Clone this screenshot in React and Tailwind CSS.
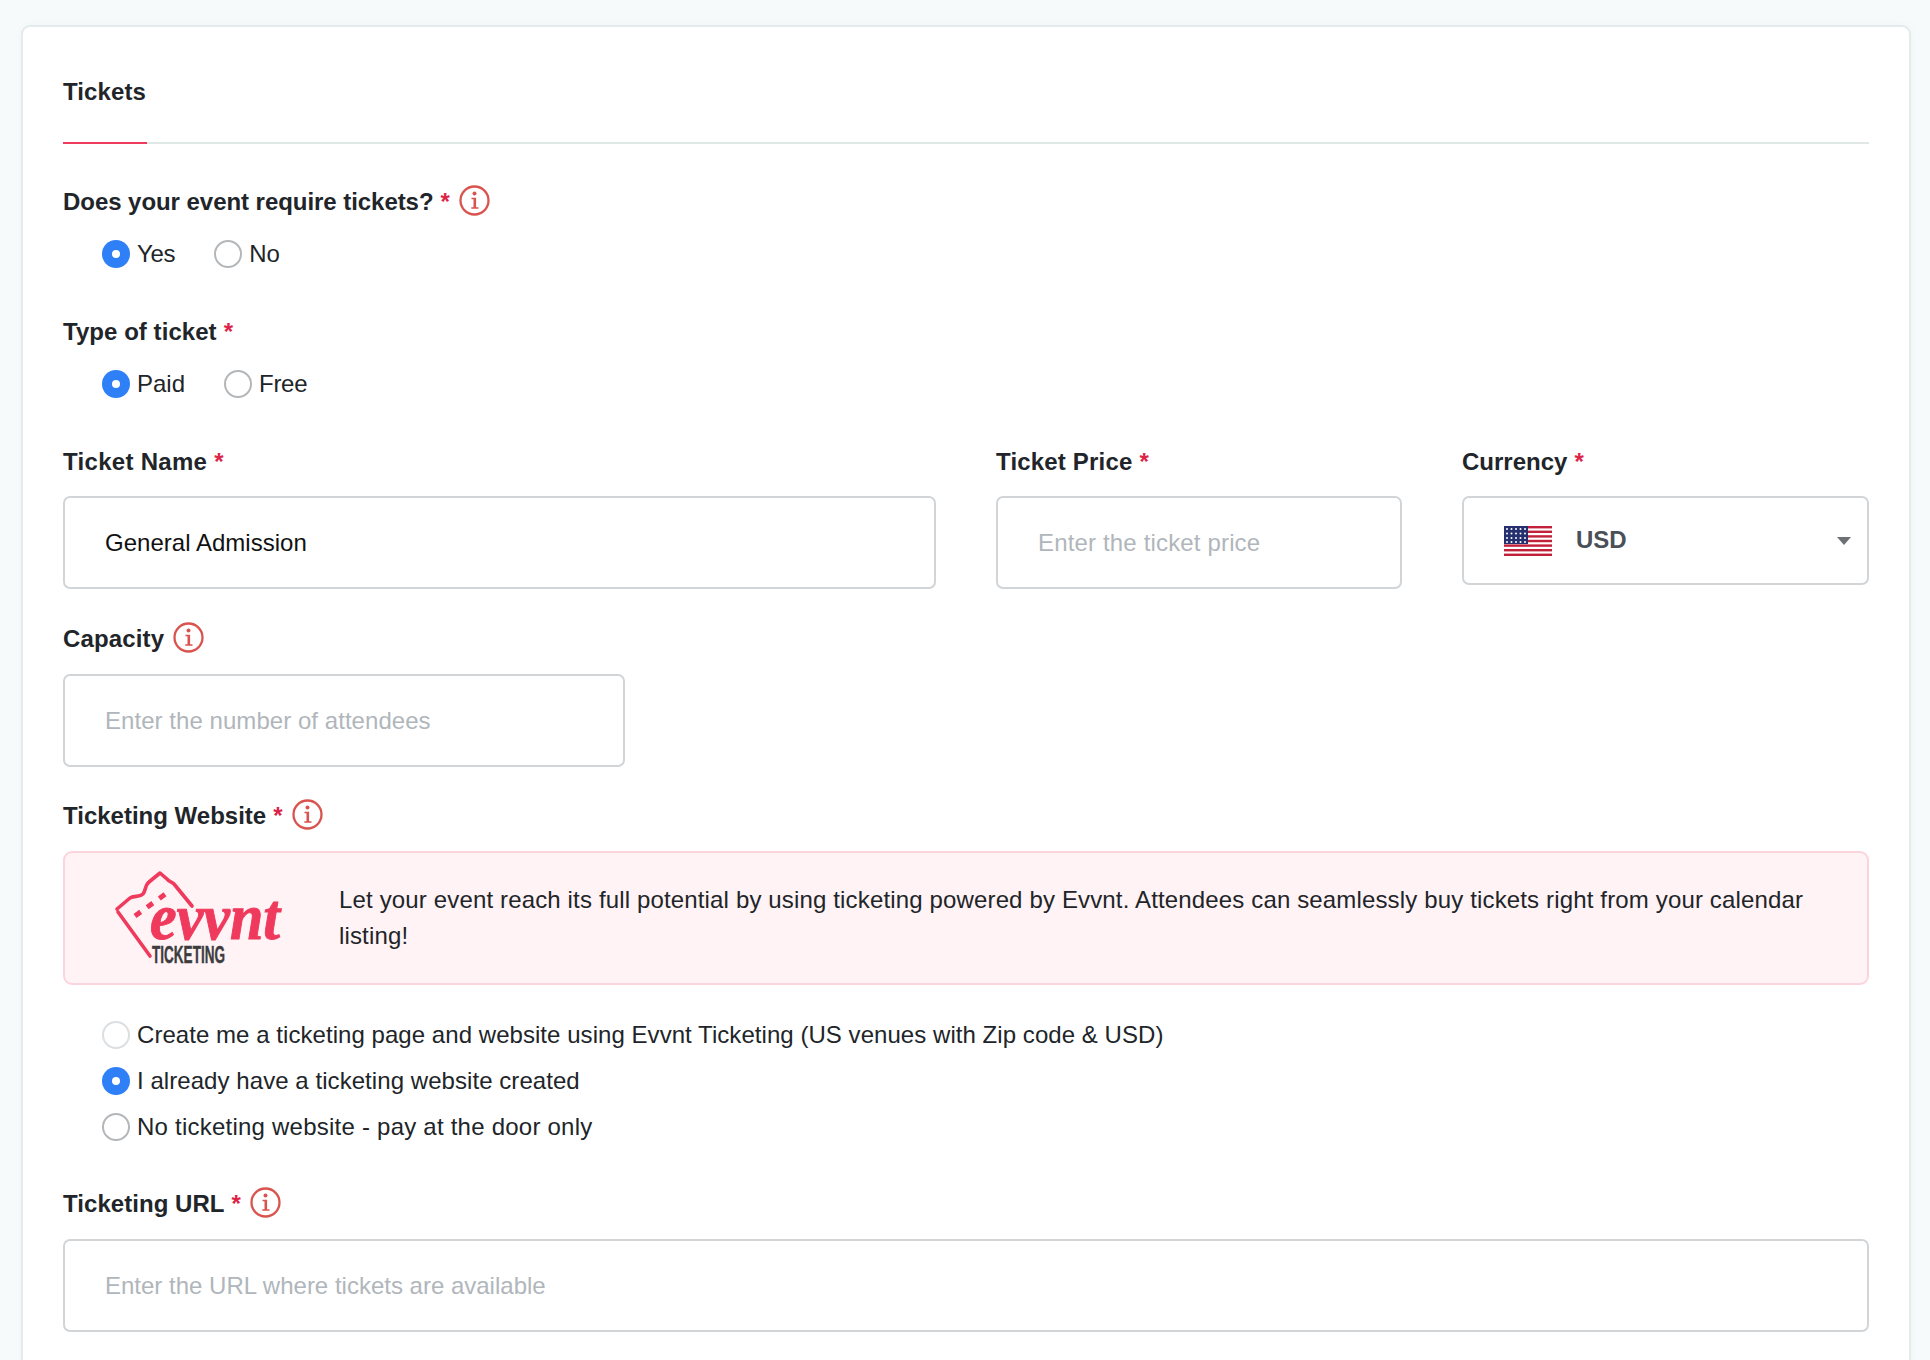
const sans = { fontFamily: '"Liberation Sans", Arial, sans-serif' };

const InfoIcon = () => (
  <svg width="31" height="31" viewBox="0 0 31 31" fill="none" className="shrink-0">
    <circle cx="15.5" cy="15.5" r="14" stroke="#d9534f" strokeWidth="2.3" />
    <circle cx="15.5" cy="8.5" r="2" fill="#d9534f" />
    <path d="M12.5 12.8h4.6v9.4h2.4v1.5h-7.2v-1.5h2.2v-8h-2z" fill="#d9534f" />
  </svg>
);

const Req = () => <span className="text-[#dc2447] ml-[7px]">*</span>;

const Label = ({ children, required, info, className = '' }) => (
  <div className={`flex items-center h-[34px] text-[24px] font-bold text-[#212529] leading-none ${className}`}>
    <span>{children}</span>
    {required && <Req />}
    {info && <span className="ml-[9px] -mt-[3px]"><InfoIcon /></span>}
  </div>
);

const Radio = ({ checked, faint }) =>
  checked ? (
    <span className="w-[28px] h-[28px] rounded-full bg-[#2f80f6] flex items-center justify-center shrink-0">
      <span className="w-[8px] h-[8px] rounded-full bg-white" />
    </span>
  ) : (
    <span className={`w-[28px] h-[28px] rounded-full bg-white border-2 shrink-0 ${faint ? 'border-[#dcdfe2]' : 'border-[#b4b7ba]'}`} />
  );

const RadioItem = ({ label, checked, faint, className = '' }) => (
  <div className={`flex items-center gap-[7px] text-[24px] leading-none text-[#212529] ${className}`}>
    <Radio checked={checked} faint={faint} />
    <span>{label}</span>
  </div>
);

const Field = ({ value, placeholder, className = '' }) => (
  <div className={`h-[93px] border-2 border-[#d2d5d8] rounded-[7px] flex items-center px-[40px] text-[24px] ${value ? 'text-[#111]' : 'text-[#b0b6bb]'} ${className}`}>
    {value || placeholder}
  </div>
);

const UsFlag = () => (
  <svg width="48" height="30" viewBox="0 0 48 30" className="shrink-0">
    <rect width="48" height="30" fill="#fff" />
    {[0, 4.6, 9.2, 13.8, 18.4, 23, 27.6].map((y) => (
      <rect key={y} y={y} width="48" height="2.4" fill="#c3203a" />
    ))}
    <rect width="24" height="18" fill="#27306f" />
    {[3, 7.5, 12, 16].map((y) =>
      [3, 7.5, 12, 16.5, 21].map((x) => <circle key={`${x}-${y}`} cx={x} cy={y} r="1" fill="#fff" />)
    )}
  </svg>
);

const EvvntLogo = () => (
  <svg width="170" height="96" viewBox="0 0 170 96" className="shrink-0 overflow-visible">
    {/* ticket outline, open at the lower right where the wordmark sits */}
    <path
      d="M2 39 L15 28 C20 25 24 28 28 24 C31 20 30 15 34 12 L45 3 L52 9 C54 12 56 11 59 14 L77 36 M3 42 L35 86"
      fill="none"
      stroke="#ef3a5d"
      strokeWidth="3.6"
      strokeLinejoin="round"
      strokeLinecap="round"
    />
    <path d="M20 46 L56 20" fill="none" stroke="#ef3a5d" strokeWidth="5" strokeDasharray="7 8" />
    <text x="35" y="69" fill="#ef3a5d" stroke="#ef3a5d" strokeWidth="1" textLength="130" lengthAdjust="spacingAndGlyphs" style={{ fontFamily: '"Liberation Serif", serif', fontStyle: 'italic', fontWeight: 700, fontSize: 66 }}>evvnt</text>
    <text x="37" y="93" fill="#3d3d3f" stroke="#3d3d3f" strokeWidth="0.4" textLength="73" lengthAdjust="spacingAndGlyphs" style={{ fontFamily: '"Liberation Sans", sans-serif', fontWeight: 700, fontSize: 23 }}>TICKETING</text>
  </svg>
);

export default function App() {
  return (
    <div className="h-[1360px] overflow-hidden bg-[#f6fafb] pt-[25px] px-[21px]" style={sans}>
      <div className="w-[1890px] bg-white border-2 border-[#e3ebeb] rounded-[9px] px-[40px] pt-[40px] pb-[40px] min-h-[1400px] shadow-[0_0_8px_rgba(0,0,0,0.03)]">
        <div className="border-b-2 border-[#dfe7e7] h-[77px]">
          <div className="w-[84px] h-[77px] border-b-2 border-[#ef3a5d] text-[24px] font-bold text-[#212529] leading-[50px] tracking-[0.1px]">Tickets</div>
        </div>

        <Label required info className="mt-[41px] tracking-[-0.05px]">Does your event require tickets?</Label>
        <div className="flex gap-[39px] pl-[39px] mt-[21px] h-[28px]">
          <RadioItem label="Yes" checked className="tracking-[-0.3px]" />
          <RadioItem label="No" />
        </div>

        <Label required className="mt-[47px] tracking-[0.05px]">Type of ticket</Label>
        <div className="flex gap-[39px] pl-[39px] mt-[21px] h-[28px]">
          <RadioItem label="Paid" checked />
          <RadioItem label="Free" className="tracking-[-0.3px]" />
        </div>

        <div className="flex gap-[60px] mt-[47px]">
          <div className="w-[873px]">
            <Label required className="tracking-[0.3px]">Ticket Name</Label>
            <Field value="General Admission" className="mt-[17px] tracking-[0.02px]" />
          </div>
          <div className="w-[406px]">
            <Label required className="tracking-[0.18px]">Ticket Price</Label>
            <Field placeholder="Enter the ticket price" className="mt-[17px] tracking-[0.16px]" />
          </div>
          <div className="w-[407px]">
            <Label required>Currency</Label>
            <div className="mt-[17px] h-[89px] border-2 border-[#d2d5d8] rounded-[7px] flex items-center pl-[40px] pr-[16px]">
              <UsFlag />
              <span className="ml-[24px] -mt-[1px] text-[24px] font-bold text-[#495057]">USD</span>
              <span className="ml-auto w-0 h-0 border-x-[7px] border-x-transparent border-t-[8px] border-t-[#6c7075]" />
            </div>
          </div>
        </div>

        <Label info className="mt-[33px] tracking-[0.15px]">Capacity</Label>
        <Field placeholder="Enter the number of attendees" className="mt-[18px] w-[562px] tracking-[0.05px]" />

        <Label required info className="mt-[32px]">Ticketing Website</Label>
        <div className="mt-[18px] h-[134px] bg-[#fff3f5] border-2 border-[#fcd5dc] rounded-[9px] flex items-center pl-[50px] pr-[50px] gap-[54px]">
          <EvvntLogo />
          <p className="text-[24px] leading-[36px] text-[#212529] tracking-[0.15px]">
            Let your event reach its full potential by using ticketing powered by Evvnt. Attendees can seamlessly buy tickets right from your calendar listing!
          </p>
        </div>

        <div className="flex flex-col gap-[18px] pl-[39px] mt-[36px]">
          <RadioItem label="Create me a ticketing page and website using Evvnt Ticketing (US venues with Zip code & USD)" faint className="tracking-[0.05px]" />
          <RadioItem label="I already have a ticketing website created" checked className="tracking-[0.06px]" />
          <RadioItem label="No ticketing website - pay at the door only" className="tracking-[0.23px]" />
        </div>

        <Label required info className="mt-[46px] tracking-[0.05px]">Ticketing URL</Label>
        <Field placeholder="Enter the URL where tickets are available" className="mt-[18px]" />
      </div>
    </div>
  );
}
